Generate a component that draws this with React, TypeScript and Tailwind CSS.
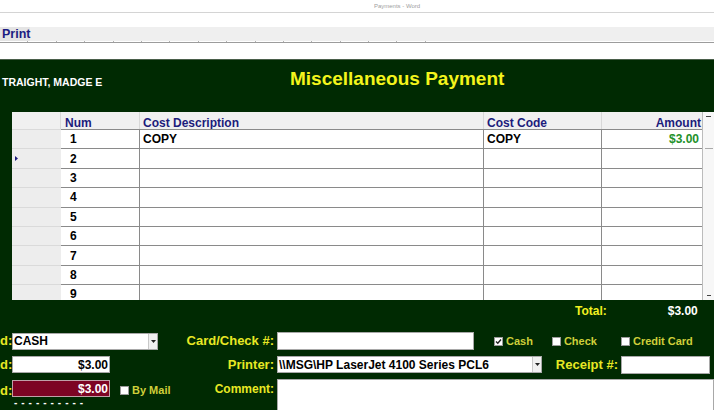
import { ReactNode } from 'react';

const cols = [49, 79, 344, 118, 100];

type Row = { num: number; desc?: string; code?: string; amount?: string };

const rows: Row[] = [
  { num: 1, desc: 'COPY', code: 'COPY', amount: '$3.00' },
  { num: 2 },
  { num: 3 },
  { num: 4 },
  { num: 5 },
  { num: 6 },
  { num: 7 },
  { num: 8 },
  { num: 9 },
];

function DropArrow() {
  return (
    <div className="flex h-full w-[9px] items-center justify-center border-l border-[#c8c8c8] bg-[#f0f0f0]">
      <svg width="5" height="3" viewBox="0 0 5 3">
        <path d="M0 0h5L2.5 3z" fill="#222" />
      </svg>
    </div>
  );
}

function Check({ checked, label }: { checked?: boolean; label: string }) {
  return (
    <div className="flex items-center gap-[3px] whitespace-nowrap">
      <div className="flex h-[9px] w-[9px] shrink-0 items-center justify-center border border-[#9a9a9a] bg-white">
        {checked && (
          <svg width="7" height="7" viewBox="0 0 7 7">
            <path d="M1 3.5l1.8 1.8L6 1.5" fill="none" stroke="#222" strokeWidth="1.4" />
          </svg>
        )}
      </div>
      <span className="text-[11px] font-bold text-[#cfcf3a]">{label}</span>
    </div>
  );
}

function Label({ children, className = '' }: { children: ReactNode; className?: string }) {
  return <div className={`shrink-0 whitespace-nowrap text-right font-bold text-[#e8e824] ${className}`}>{children}</div>;
}

export default function App() {
  return (
    <div className="flex h-[410px] w-[714px] flex-col overflow-hidden bg-white font-['Liberation_Sans',Arial,sans-serif]">
      {/* title bar */}
      <div className="flex h-[13px] shrink-0 items-center justify-center border-b border-[#d4d4d4] pl-[80px] text-[6px] text-[#a0a0a0]">
        Payments - Word
      </div>
      <div className="h-[14px] shrink-0" />
      {/* tab strip */}
      <div className="flex h-[14px] shrink-0 bg-[#efefef]">
        <div className="flex w-[30px] items-center bg-[#e4e4e4] pl-[2px] text-[12.5px] font-bold text-[#1c1c82]">Print</div>
      </div>
      <div className="flex h-[2px] shrink-0 border-b border-[#9c9c9c]">
        {Array.from({ length: 15 }).map((_, i) => (
          <div key={i} className="flex w-[28.4px] justify-end">
            <div className="h-px w-px bg-[#b0b0b0]" />
          </div>
        ))}
      </div>
      <div className="h-[16px] shrink-0" />

      {/* form */}
      <div className="flex min-h-0 flex-1 flex-col border-t border-[#4a5e4a] bg-[#002a02]">
        <div className="flex h-[52px] shrink-0 items-start">
          <div className="w-[290px] pl-[2px] pt-[15px] text-[10.5px] font-bold text-white">TRAIGHT, MADGE E</div>
          <div className="pt-[5px] text-[19px] font-bold text-[#f4f41c]">Miscellaneous Payment</div>
        </div>

        {/* grid */}
        <div className="ml-[12px] flex h-[188px] shrink-0 overflow-hidden">
          <div className="w-[690px] bg-white">
            <div className="flex h-[17px] bg-[#f0f0f0] text-[12px] font-bold text-[#1c1c7c]">
              <div className="border-r border-[#d8d8d8]" style={{ width: cols[0] }} />
              <div className="border-r border-[#d8d8d8] pl-[4px] pt-[2px]" style={{ width: cols[1] }}>Num</div>
              <div className="border-r border-[#d8d8d8] pl-[3px] pt-[2px]" style={{ width: cols[2] }}>Cost Description</div>
              <div className="border-r border-[#d8d8d8] pl-[3px] pt-[2px]" style={{ width: cols[3] }}>Cost Code</div>
              <div className="pr-[1px] pt-[2px] text-right" style={{ width: cols[4] }}>Amount</div>
            </div>
            {rows.map((r) => (
              <div key={r.num} className="flex h-[19.4px] text-[12px] font-bold text-black">
                <div className="flex items-center border-t border-[#dadada] bg-[#ededed] pl-[3px]" style={{ width: cols[0] }}>
                  {r.num === 2 && (
                    <svg width="3" height="5" viewBox="0 0 3 5">
                      <path d="M0 0l3 2.5L0 5z" fill="#1c1c7c" />
                    </svg>
                  )}
                </div>
                <div className="flex items-center border-t border-r border-[#8a8a8a] pl-[9px]" style={{ width: cols[1] }}>{r.num}</div>
                <div className="flex items-center border-t border-r border-[#8a8a8a] pl-[3px]" style={{ width: cols[2] }}>{r.desc}</div>
                <div className="flex items-center border-t border-r border-[#8a8a8a] pl-[3px]" style={{ width: cols[3] }}>{r.code}</div>
                <div className="flex items-center justify-end border-t border-[#8a8a8a] pr-[3px] text-[#23912a]" style={{ width: cols[4] }}>{r.amount}</div>
              </div>
            ))}
          </div>
          <div className="flex w-[12px] flex-col items-center border-l border-[#bcbcbc] bg-[#f7f7f7]">
            <div className="mt-[4px] h-px w-[5px] bg-[#444]" />
            <div className="mt-[31px] h-px w-[8px] bg-[#aaa]" />
            <div className="flex-1" />
            <div className="mb-[4px] h-px w-[4px] bg-[#444]" />
          </div>
        </div>

        {/* total */}
        <div className="flex h-[22px] shrink-0 items-center text-[12px] font-bold">
          <div className="w-[575px]" />
          <div className="text-[#f0f020]">Total:</div>
          <div className="w-[91px] text-right text-white">$3.00</div>
        </div>

        {/* row 1 */}
        <div className="mt-[10px] flex h-[18px] shrink-0 items-center">
          <Label className="w-[11px] text-[13px]">d:</Label>
          <div className="ml-[1px] flex h-[17px] w-[146px] shrink-0 items-center border border-[#a8a8a8] bg-white">
            <span className="flex-1 pl-[1px] text-[12px] font-bold text-black">CASH</span>
            <DropArrow />
          </div>
          <Label className="w-[119px] pr-[3px] text-[13px]">Card/Check #:</Label>
          <div className="h-[18px] w-[197px] shrink-0 border border-[#a8a8a8] bg-white" />
          <div className="ml-[20px] flex gap-[19px]">
            <Check checked label="Cash" />
            <Check label="Check" />
            <div className="ml-[5px]">
              <Check label="Credit Card" />
            </div>
          </div>
        </div>

        {/* row 2 */}
        <div className="mt-[6px] flex h-[17px] shrink-0 items-center">
          <Label className="w-[11px] text-[13px]">d:</Label>
          <div className="ml-[1px] flex h-[17px] w-[98px] shrink-0 items-center justify-end border border-[#a8a8a8] bg-white pr-[1px] text-[12px] font-bold text-black">
            $3.00
          </div>
          <Label className="w-[167px] pr-[3px] text-[13px]">Printer:</Label>
          <div className="flex h-[17px] w-[265px] shrink-0 items-center border border-[#a8a8a8] bg-white">
            <span className="flex-1 pl-[1px] text-[12px] font-bold text-black">\\MSG\HP LaserJet 4100 Series PCL6</span>
            <DropArrow />
          </div>
          <Label className="w-[79px] pr-[3px] text-[13px]">Receipt #:</Label>
          <div className="h-[18px] w-[89px] shrink-0 border border-[#a8a8a8] bg-white" />
        </div>

        {/* row 3 */}
        <div className="mt-[6px] flex shrink-0 items-start">
          <Label className="mt-[2px] w-[11px] text-[13px]">d:</Label>
          <div className="ml-[1px] flex shrink-0 flex-col">
            <div className="mt-[1px] flex h-[17px] w-[98px] items-center justify-end border border-[#c0a0a8] bg-[#7d0424] pr-[1px] text-[12px] font-bold text-white">
              $3.00
            </div>
            <div className="mt-[1px] pl-[2px] text-[10px] font-bold leading-none tracking-[0.6px] text-white">- - - - - - - - - -</div>
          </div>
          <div className="ml-[10px] mt-[3px] w-[54px] shrink-0">
            <Check label="By Mail" />
          </div>
          <Label className="w-[103px] pr-[3px] pt-[1px] text-[12px]">Comment:</Label>
          <div className="h-[40px] flex-1 border border-[#a8a8a8] bg-white" />
        </div>
      </div>
    </div>
  );
}
